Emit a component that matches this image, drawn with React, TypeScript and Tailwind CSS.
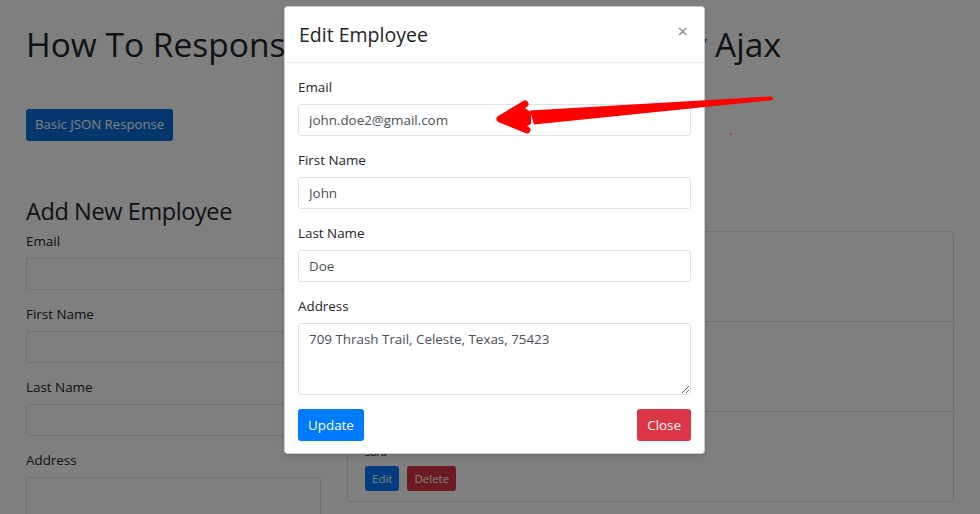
import React from "react"

const font = { fontFamily: '"Open Sans", "Noto Sans", Arial, sans-serif' }

const employees = [
  { id: 1, name: "John Doe", email: "john.doe2@gmail.com" },
  { id: 2, name: "Jane Roe", email: "jane.roe@gmail.com" },
  { id: 3, name: "Sara", email: "sara" },
]

function Field({ label, value, area }: { label: string; value?: string; area?: boolean }) {
  return (
    <div className="mb-[14px]">
      <label className="block text-[13.4px] leading-[20px] text-[#212529] mb-[7px]">{label}</label>
      {area ? (
        <textarea
          readOnly
          defaultValue={value}
          className="block w-full h-[72px] rounded-[3px] border border-[#dfe2e5] bg-white px-[10px] py-[5px] text-[13.4px] leading-[20px] text-[#495057] outline-none"
        />
      ) : (
        <input
          readOnly
          value={value ?? ""}
          className="block w-full h-[32px] rounded-[3px] border border-[#dfe2e5] bg-white px-[10px] text-[13.4px] text-[#495057] outline-none"
        />
      )}
    </div>
  )
}

function Page() {
  return (
    <div className="px-[26px] pt-[24px]">
      <h1 className="text-[33.5px] leading-[40px] font-medium text-[#212529] whitespace-nowrap">
        How To Response JSON Data in Laravel 8 by Ajax
      </h1>
      <div className="mt-[45px]">
        <button className="h-[32px] px-[9px] rounded-[3px] bg-[#0a6fdc] text-white text-[13.2px]">
          Basic JSON Response
        </button>
      </div>
      <div className="mt-[54px] flex gap-[26px]">
        <div className="w-[295px] shrink-0">
          <h2 className="text-[23.5px] leading-[32px] font-medium tracking-[-0.4px] text-[#212529] mb-[4px]">
            Add New Employee
          </h2>
          <Field label="Email" />
          <Field label="First Name" />
          <Field label="Last Name" />
          <Field label="Address" area />
        </div>
        <div className="w-[616px]">
          <h2 className="text-[23.5px] leading-[32px] font-medium text-[#212529] mb-[4px]">Employee List</h2>
          <div className="rounded-[3px] border border-[#dfdfdf]">
            {employees.map((e, i) => (
              <div
                key={e.id}
                className={`flex flex-col justify-end px-[17px] pb-[10px] ${
                  i < employees.length - 1 ? "h-[90px] border-b border-[#dfdfdf]" : "h-[89px]"
                }`}
              >
                <p className="text-[13px] leading-[16px] font-semibold text-[#212529]">{e.name}</p>
                <p className="mt-[8px] text-[11px] leading-[14px] text-[#212529]">{e.email}</p>
                <div className="mt-[7px] flex gap-[8px]">
                  <button className="h-[25px] px-[7px] rounded-[3px] bg-[#007bff] text-white text-[11.5px]">Edit</button>
                  <button className="h-[25px] px-[7px] rounded-[3px] bg-[#dc3545] text-white text-[11.5px]">Delete</button>
                </div>
              </div>
            ))}
          </div>
        </div>
      </div>
    </div>
  )
}

function Arrow() {
  return (
    <svg className="absolute inset-0 pointer-events-none" width="980" height="514" viewBox="0 0 980 514">
      <polygon points="772,96.3 773,100 534,124.5 530,110.5" fill="#f00" />
      <polygon points="501,119 523,107 531,112 531,124 524,128" fill="#f00" />
      <polyline
        points="525,104 500,119 527,130"
        fill="none"
        stroke="#f00"
        strokeWidth="7"
        strokeLinecap="round"
        strokeLinejoin="round"
      />
      <circle cx="731" cy="134" r="0.8" fill="#e00" />
    </svg>
  )
}

export default function App() {
  return (
    <div className="relative w-[980px] h-[514px] overflow-hidden bg-white" style={font}>
      <Page />
      <div className="absolute inset-0 bg-black/50" />
      <div className="absolute inset-0 pl-[284px] pt-[6px]">
        <div className="w-[421px] rounded-[4px] border border-black/20 bg-white shadow-md">
          <div className="h-[56px] flex items-center justify-between px-[14px] border-b border-[#e9ecef]">
            <h4 className="text-[19.5px] leading-[24px] font-medium text-[#212529]">Edit Employee</h4>
            <span className="text-[19px] leading-none text-[#8a8a8a] mr-[2px] -mt-[6px]">×</span>
          </div>
          <div className="px-[13px] pt-[14px] pb-[12px]">
            <Field label="Email" value="john.doe2@gmail.com" />
            <Field label="First Name" value="John" />
            <Field label="Last Name" value="Doe" />
            <Field label="Address" value="709 Thrash Trail, Celeste, Texas, 75423" area />
            <div className="flex justify-between">
              <button className="h-[32px] px-[10px] rounded-[3px] bg-[#007bff] text-white text-[13.4px]">Update</button>
              <button className="h-[32px] px-[10px] rounded-[3px] bg-[#dc3545] text-white text-[13.4px]">Close</button>
            </div>
          </div>
        </div>
      </div>
      <Arrow />
    </div>
  )
}
